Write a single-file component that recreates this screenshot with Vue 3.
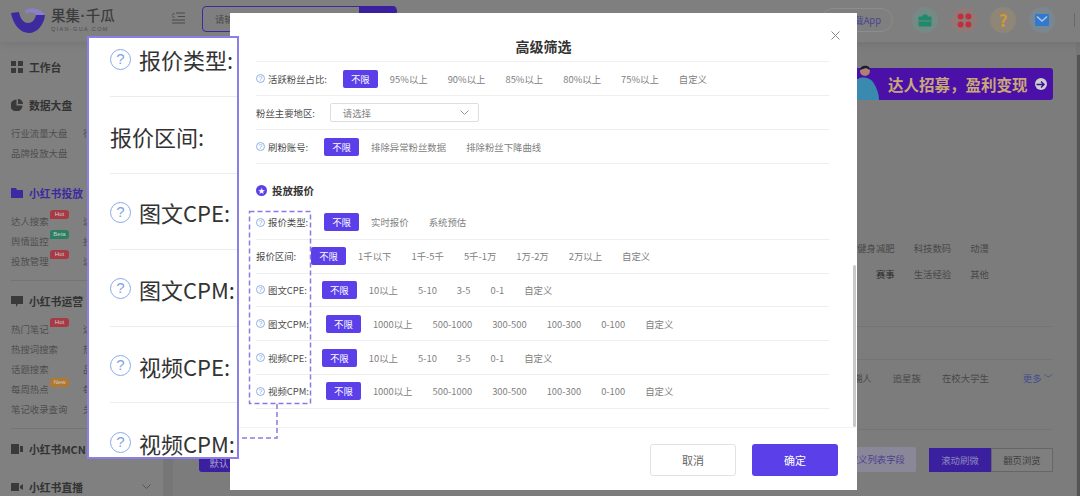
<script setup>
const sideGroups = [
  { icon: 'grid', title: '工作台', items: [] },
  { icon: 'pie', title: '数据大盘', items: [['行业流量大盘', '', '行'], ['品牌投放大盘', '', '']] },
  { icon: 'folder', title: '小红书投放', active: true, items: [['达人搜索', 'Hot', '达'], ['舆情监控', 'Beta', '投'], ['投放管理', 'Hot', '达']], line: true },
  { icon: 'chat', title: '小红书运营', items: [['热门笔记', 'Hot', '达'], ['热搜词搜索', '', '热'], ['话题搜索', '', '品'], ['每周热点', 'New', '每'], ['笔记收录查询', '', '关']], line: true },
  { icon: 'mcn', title: '小红书MCN', items: [] },
  { icon: 'video', title: '小红书直播', items: [], more: true }
]
const calloutRows = [
  { label: '报价类型:', help: true },
  { label: '报价区间:', help: false },
  { label: '图文CPE:', help: true },
  { label: '图文CPM:', help: true },
  { label: '视频CPE:', help: true },
  { label: '视频CPM:', help: true }
]
const audience = ['95%以上', '90%以上', '85%以上', '80%以上', '75%以上', '自定义']
const cpe = ['10以上', '5-10', '3-5', '0-1', '自定义']
const cpm = ['1000以上', '500-1000', '300-500', '100-300', '0-100', '自定义']
const priceRows = [
  { label: '报价类型:', help: true, options: ['实时报价', '系统预估'] },
  { label: '报价区间:', help: false, options: ['1千以下', '1千-5千', '5千-1万', '1万-2万', '2万以上', '自定义'], fit: 'tight' },
  { label: '图文CPE:', help: true, options: cpe, fit: 'tight' },
  { label: '图文CPM:', help: true, options: cpm, fit: 'wide' },
  { label: '视频CPE:', help: true, options: cpe, fit: 'tight' },
  { label: '视频CPM:', help: true, options: cpm, fit: 'wide' }
]
</script>

<template>
  <div class="stage">
    <!-- dimmed page behind the dialog -->
    <div class="page">
      <header class="topbar">
        <div class="logo">
          <svg width="34" height="25" viewBox="0 0 34 25">
            <path d="M0 5C2 16 9 25 18 25C26 25 33 17 34 7L25 7C24 12 21 15 17 15C12 15 9 10 8 4Z" fill="#3d2a9f" />
            <path d="M14 2C20 -1 30 0 34 7L25 7C23 4 18 4 15 6Z" fill="#8a80c8" />
          </svg>
          <div class="logo-text">
            <span class="logo-name">果集<span class="logo-dot">·</span>千瓜</span>
            <span class="logo-url">QIAN-GUA.COM</span>
          </div>
        </div>
        <svg class="menu-icon" width="13" height="12" viewBox="0 0 13 12">
          <path d="M4 1H13M0 3.5L2.5 1M6 4.5H13M0 3.5L2.5 6M0 8H13M0 11H13" stroke="#4a4a4a" stroke-width="1" fill="none" />
        </svg>
        <div class="search">
          <span class="search-text">请输入</span>
          <span class="search-btn"></span>
        </div>
        <div class="top-right">
          <span class="app-pill">下载App</span>
          <span class="round r-green">
            <svg width="14" height="13" viewBox="0 0 14 13"><path d="M1 3H13V12H1ZM5 3V1H9V3" fill="#1f8a6a" stroke="#1f8a6a" /><path d="M1 7H13" stroke="#6f8a84" /></svg>
          </span>
          <span class="round r-red">
            <svg width="15" height="15" viewBox="0 0 15 15" fill="#c0303c"><circle cx="3.6" cy="3.6" r="3" /><circle cx="11.4" cy="3.6" r="3" /><circle cx="3.6" cy="11.4" r="3" /><circle cx="11.4" cy="11.4" r="3" /></svg>
          </span>
          <span class="round r-yellow">?</span>
          <span class="round r-blue">
            <svg width="14" height="12" viewBox="0 0 14 12"><rect width="14" height="12" rx="1.5" fill="#2f7ad0" /><path d="M2 2.5L7 7L12 2.5" stroke="#b8c8dc" stroke-width="1.4" fill="none" /></svg>
          </span>
          <span class="top-sep"></span>
        </div>
      </header>
      <div class="under">
        <aside class="side">
          <section v-for="g in sideGroups" :key="g.title" class="side-group" :class="{ lined: g.line, filled: g.items.length }">
            <div class="side-title" :class="{ active: g.active }">
              <svg class="side-icon" width="12" height="12" viewBox="0 0 12 12" :fill="g.active ? '#3d2a9f' : '#3a3a3a'">
                <template v-if="g.icon === 'grid'"><rect width="5" height="5" /><rect x="7" width="5" height="5" /><rect y="7" width="5" height="5" /><rect x="7" y="7" width="5" height="5" /></template>
                <template v-else-if="g.icon === 'pie'"><path d="M5.5 0.5V6.5H11.5A6 6 0 1 1 5.5 0.5Z" /><path d="M7 0A5 5 0 0 1 12 5H7Z" /></template>
                <path v-else-if="g.icon === 'folder'" d="M0 1H5L6 3H12V11H0Z" />
                <path v-else-if="g.icon === 'chat'" d="M0 1H12V9H7L5 12V9H0Z" />
                <template v-else-if="g.icon === 'mcn'"><rect y="1" width="8" height="10" /><rect x="9" y="3" width="3" height="6" /></template>
                <path v-else d="M0 2H8V10H0ZM9 5L12 3V9L9 7Z" />
              </svg>
              <span>{{ g.title }}</span>
              <svg v-if="g.more" class="side-chev" width="9" height="6" viewBox="0 0 9 6"><path d="M0.5 0.5L4.5 4.5L8.5 0.5" stroke="#555" fill="none" /></svg>
            </div>
            <div v-for="it in g.items" :key="it[0]" class="side-item">
              <span class="side-link">{{ it[0] }}<i v-if="it[1]" class="tag" :class="'tag-' + it[1]">{{ it[1] }}</i></span>
              <span class="side-col2">{{ it[2] }}</span>
            </div>
          </section>
        </aside>
        <main class="main">
          <div class="banner-row">
            <div class="banner">
              <svg class="banner-person" width="26" height="36" viewBox="0 0 26 36">
                <circle cx="10" cy="7" r="5" fill="#b08070" />
                <path d="M5 6C5 1 15 0 15 6L11 4Z" fill="#1a1a3a" />
                <path d="M0 36V18C2 12 14 12 18 18C22 24 24 30 24 36Z" fill="#3a8ab0" />
              </svg>
              <span class="banner-text">达人招募，盈利变现</span>
              <span class="banner-arrow">
                <svg width="9" height="9" viewBox="0 0 9 9"><path d="M0.5 4.5H8M5 1.5L8 4.5L5 7.5" stroke="#3a1090" stroke-width="1.4" fill="none" /></svg>
              </span>
            </div>
          </div>
          <div class="block tags-block">
            <div class="tag-line"><span>健身减肥</span><span>科技数码</span><span>动漫</span></div>
            <div class="tag-line"><span class="dark">赛事</span><span>生活经验</span><span>其他</span></div>
          </div>
          <div class="block spacer-block"></div>
          <div class="block people-block">
            <div class="tag-line people">
              <span>潮人</span><span>追星族</span><span>在校大学生</span>
              <span class="more">更多 ﹀</span>
            </div>
          </div>
          <div class="tools">
            <span class="tool-left">默认</span>
            <span class="tool-custom">自定义列表字段</span>
            <div class="seg"><span class="seg-on">滚动刷微</span><span class="seg-off">翻页浏览</span></div>
          </div>
        </main>
      </div>
    </div>
    <span class="page-scroll"></span>

    <!-- dialog -->
    <div class="dialog">
      <h2 class="dlg-title">高级筛选</h2>
      <svg class="dlg-close" width="9" height="9" viewBox="0 0 9 9"><path d="M0.5 0.5L8.5 8.5M8.5 0.5L0.5 8.5" stroke="#888" /></svg>
      <div class="dlg-body">
        <div class="row">
          <span class="lbl"><i class="q">?</i>活跃粉丝占比:</span>
          <span class="chip">不限</span>
          <span v-for="o in audience" :key="o" class="opt">{{ o }}</span>
        </div>
        <div class="row">
          <span class="lbl tight">粉丝主要地区:</span>
          <span class="select">请选择
            <svg width="9" height="5" viewBox="0 0 9 5"><path d="M0.5 0.5L4.5 4.5L8.5 0.5" stroke="#999" fill="none" /></svg>
          </span>
        </div>
        <div class="row">
          <span class="lbl"><i class="q">?</i>刷粉账号:</span>
          <span class="chip">不限</span>
          <span class="opt">排除异常粉丝数据</span>
          <span class="opt">排除粉丝下降曲线</span>
        </div>
        <div class="sec-title">
          <span class="sec-dot">★</span>投放报价
        </div>
        <div v-for="r in priceRows" :key="r.label" class="row price">
          <span class="lbl" :class="r.fit"><i v-if="r.help" class="q">?</i>{{ r.label }}</span>
          <span class="chip">不限</span>
          <span v-for="o in r.options" :key="o" class="opt">{{ o }}</span>
        </div>
      </div>
      <span class="dlg-scroll"></span>
      <footer class="dlg-foot">
        <button class="btn ghost">取消</button>
        <button class="btn solid">确定</button>
      </footer>
    </div>

    <!-- dashed marker + leader line -->
    <svg class="marker" width="1080" height="496" viewBox="0 0 1080 496">
      <rect x="249.5" y="211.5" width="61" height="192" fill="none" stroke="#8a78e6" stroke-width="1.5" stroke-dasharray="5 3" />
      <path d="M277 404V438H239" fill="none" stroke="#8a78e6" stroke-width="1.5" stroke-dasharray="5 3" />
    </svg>

    <!-- magnified callout -->
    <div class="callout">
      <div class="c-list">
        <div v-for="r in calloutRows" :key="r.label" class="c-row">
          <i v-if="r.help" class="c-q">?</i>{{ r.label }}
        </div>
      </div>
    </div>
  </div>
</template>

<style>
html, body { margin: 0; padding: 0; }
</style>

<style scoped>
.stage {
  position: relative;
  width: 1080px;
  height: 496px;
  overflow: hidden;
  font-family: "Noto Sans CJK SC", "Noto Sans", sans-serif;
  background: #767676;
}
.page { width: 1080px; height: 496px; display: flex; flex-direction: column; }
.page-scroll { position: absolute; right: 0; top: 55px; width: 3px; height: 441px; background: #555; }

/* top bar */
.topbar {
  height: 42px;
  flex: none;
  display: flex;
  align-items: center;
  background: #7f7f7f;
  padding: 0 0 0 11px;
  box-shadow: 0 2px 8px rgba(0, 0, 0, 0.08);
  position: relative;
}
.logo { display: flex; align-items: center; gap: 6px; width: 161px; margin-top: -2px; }
.logo-text { display: flex; flex-direction: column; }
.logo-name { font-size: 14.5px; line-height: 17px; font-weight: 500; color: #3c3c3c; white-space: nowrap; margin-top: -2px; }
.logo-dot { font-family: "Liberation Sans", sans-serif; font-weight: 700; margin: 0 0.5px; }
.logo-url { font-size: 5.5px; line-height: 8px; letter-spacing: 1.35px; color: #4c4c4c; font-family: "Liberation Sans", sans-serif; white-space: nowrap; }
.menu-icon { margin-top: -6px; }
.search {
  margin-left: 17px;
  width: 195px;
  height: 26px;
  margin-top: -4px;
  border: 1px solid #3d2a9f;
  border-radius: 4px;
  box-sizing: border-box;
  display: flex;
  align-items: center;
  justify-content: space-between;
  font-size: 9.4px;
  color: #4a4a4a;
}
.search-text { padding-left: 12px; }
.search-btn { width: 37px; height: 26px; background: #3a1f9f; border-radius: 0 4px 4px 0; }
.top-right { margin-left: auto; display: flex; align-items: center; margin-top: -2px; }
.app-pill {
  width: 72px;
  height: 24px;
  box-sizing: border-box;
  border: 1px solid #8c8c8c;
  border-radius: 12px;
  font-size: 9.4px;
  line-height: 22px;
  color: #4a4590;
  text-align: right;
  padding-right: 11px;
  margin-right: 19px;
}
.round {
  width: 26px;
  height: 26px;
  border-radius: 50%;
  display: flex;
  align-items: center;
  justify-content: center;
  margin-right: 13px;
}
.r-green { background: #768a85; }
.r-red { background: #8f7a7a; }
.r-yellow { background: #8f8678; color: #d09a30; font-size: 17px; font-weight: 700; line-height: 26px; }
.r-blue { background: #7a8790; }
.top-sep { width: 1px; height: 14px; background: #6a6a6a; margin: 0 5px 0 6px; }

.under { flex: 1; display: flex; min-height: 0; }

/* sidebar */
.side {
  width: 163px;
  flex: none;
  background: #808080;
  padding: 15px 0 0 11px;
  box-sizing: border-box;
  overflow: hidden;
}
.side-group { margin-bottom: 18px; }
.side-group.filled { margin-bottom: 20px; }
.side-group.lined { border-bottom: 1px solid #747474; margin-right: 8px; padding-bottom: 9px; margin-bottom: 10px; }
.side-title {
  height: 20px;
  display: flex;
  align-items: center;
  gap: 6px;
  font-size: 10.8px;
  font-weight: 700;
  color: #333;
  position: relative;
}
.filled .side-title { margin-bottom: 8px; }
.side-title.active { color: #3d2a9f; }
.side-icon { flex: none; }
.side-chev { position: absolute; left: 131px; top: 7px; }
.side-item { height: 20px; display: flex; align-items: center; font-size: 9.4px; color: #4e4e4e; position: relative; }
.side-link { width: 72px; flex: none; white-space: nowrap; position: relative; }
.tag {
  font-style: normal;
  position: absolute;
  top: -4px;
  left: 39px;
  width: 19px;
  height: 9px;
  line-height: 9px;
  border-radius: 3px 3px 3px 0;
  text-align: center;
  font-size: 6px;
  color: #ccc;
  font-family: "Liberation Sans", sans-serif;
}
.tag-Hot { background: #a83a45; }
.tag-Beta { background: #2a8060; }
.tag-New { background: #b07830; }

/* main */
.main {
  flex: 1;
  margin: 0 4px 0 10px;
  padding: 26px 23px 0 26px;
  background: #7c7c7c;
  box-sizing: border-box;
  display: flex;
  flex-direction: column;
}
.banner-row { display: flex; justify-content: flex-end; }
.banner {
  width: 200px;
  height: 32px;
  background: #4a10a8;
  border-radius: 3px;
  display: flex;
  align-items: center;
  position: relative;
  padding-left: 35px;
  box-sizing: border-box;
  gap: 7px;
}
.banner-person { position: absolute; left: 2px; bottom: 0; }
.banner-text { font-size: 15.5px; font-weight: 700; color: #c8a878; white-space: nowrap; }
.banner-arrow {
  width: 12px;
  height: 12px;
  border-radius: 50%;
  background: #cfcfcf;
  display: flex;
  align-items: center;
  justify-content: center;
}
.block { border-bottom: 1px solid #747474; }
.tags-block { margin-top: 140px; padding-bottom: 44px; display: flex; flex-direction: column; gap: 10px; }
.spacer-block { height: 32px; }
.people-block { padding: 10px 0 43px; }
.tag-line { display: flex; justify-content: flex-end; gap: 19px; font-size: 9.4px; line-height: 16px; color: #484848; padding-right: 64px; }
.tag-line .dark { color: #2c2c2c; }
.people { gap: 21px; padding-right: 0; }
.people .more { color: #41508f; margin-left: 13px; white-space: nowrap; }
.tools { margin-top: 18px; display: flex; align-items: flex-end; font-size: 9.4px; height: 24px; }
.tool-left {
  width: 40px;
  height: 21px;
  box-sizing: border-box;
  padding-top: 3px;
  line-height: 18px;
  background: #3a1f9f;
  color: #a8a0d0;
  border-radius: 3px;
  text-align: center;
}
.tool-custom {
  margin-left: auto;
  width: 90px;
  height: 25px;
  line-height: 25px;
  box-sizing: border-box;
  padding-right: 11px;
  text-align: right;
  background: #8a8898;
  color: #4a4090;
  border-radius: 2px;
  white-space: nowrap;
}
.seg { display: flex; margin-left: 13px; height: 24px; line-height: 24px; }
.seg span { width: 62px; text-align: center; box-sizing: border-box; }
.seg-on { background: #3a1f9f; color: #8f88c0; }
.seg-off { background: #7f7f7f; color: #404040; border: 1px solid #666; line-height: 22px; }

/* dialog */
.dialog {
  position: absolute;
  left: 230px;
  top: 13px;
  width: 627px;
  height: 477px;
  background: #fff;
  display: flex;
  flex-direction: column;
}
.dlg-title {
  margin: 0;
  height: 48px;
  flex: none;
  text-align: center;
  font-size: 14px;
  line-height: 66px;
  font-weight: 700;
  color: #333;
  overflow: hidden;
}
.dlg-close { position: absolute; left: 600.5px; top: 17.5px; }
.dlg-body {
  margin: 0 28px 0 26px;
  height: 365px;
  flex: none;
  border-top: 1px solid #f0f0f0;
  overflow: hidden;
}
.row {
  height: 33px;
  box-sizing: content-box;
  border-bottom: 1px solid #eeeeee;
  display: flex;
  align-items: center;
  font-size: 9.4px;
}
.row.price { height: 32.8px; }
.lbl { display: flex; align-items: center; color: #4a4a4a; margin-right: 16px; white-space: nowrap; }
.lbl.tight { margin-right: 15px; }
.lbl.wide { margin-right: 17px; }
.q {
  width: 9px;
  height: 9px;
  box-sizing: border-box;
  border: 1px solid #8fb0ea;
  border-radius: 50%;
  margin-right: 3px;
  color: #7f9fe0;
  font-style: normal;
  font-size: 7px;
  line-height: 7px;
  text-align: center;
  font-family: "Liberation Sans", sans-serif;
}
.chip {
  width: 35px;
  height: 18px;
  line-height: 18px;
  border-radius: 2px;
  background: #5b3fe8;
  color: #fff;
  text-align: center;
  margin-right: -8px;
  flex: none;
}
.opt { margin-left: 20px; color: #808080; white-space: nowrap; }
.select {
  width: 149px;
  height: 19px;
  box-sizing: border-box;
  border: 1px solid #dedede;
  border-radius: 2px;
  display: flex;
  align-items: center;
  justify-content: space-between;
  padding: 0 9px 0 12px;
  color: #808080;
}
.sec-title {
  height: 42px;
  display: flex;
  align-items: center;
  padding-top: 10px;
  box-sizing: border-box;
  font-size: 10.5px;
  font-weight: 700;
  color: #333;
}
.sec-dot {
  width: 11px;
  height: 11px;
  border-radius: 50%;
  background: #5b3fe8;
  color: #fff;
  font-size: 7px;
  line-height: 11px;
  text-align: center;
  margin-right: 5px;
  font-weight: 400;
}
.dlg-scroll { position: absolute; left: 623px; top: 252px; width: 3px; height: 162px; background: #c8c8c8; border-radius: 2px; }
.dlg-foot {
  flex: 1;
  border-top: 1px solid #f2f2f2;
  display: flex;
  justify-content: flex-end;
  align-items: flex-start;
  gap: 16px;
  padding: 16px 19px 0 0;
}
.btn {
  width: 86px;
  height: 32px;
  border-radius: 3px;
  font-family: inherit;
  font-size: 11px;
  padding: 0;
}
.ghost { background: #fff; border: 1px solid #e2e2e2; color: #666; }
.solid { background: #5b3fe8; border: none; color: #fff; }

/* overlays */
.marker { position: absolute; left: 0; top: 0; pointer-events: none; }
.callout {
  position: absolute;
  left: 87px;
  top: 36px;
  width: 152px;
  height: 423px;
  box-sizing: border-box;
  background: #fff;
  border: 2px solid #8a7fe6;
  padding-left: 21px;
  overflow: hidden;
}
.c-list { margin-top: -17.6px; }
.c-row {
  height: 76.6px;
  box-sizing: border-box;
  padding-top: 2px;
  border-bottom: 1.5px solid #ececec;
  display: flex;
  align-items: center;
  font-size: 22px;
  color: #333;
  white-space: nowrap;
}
.c-row:last-child { border-bottom: none; }
.c-q {
  width: 21px;
  height: 21px;
  box-sizing: border-box;
  border: 1.8px solid #8aaae8;
  border-radius: 50%;
  margin-right: 8px;
  color: #7fa4e6;
  font-style: normal;
  font-size: 15px;
  line-height: 18px;
  text-align: center;
  font-family: "Liberation Sans", sans-serif;
  flex: none;
}
</style>
